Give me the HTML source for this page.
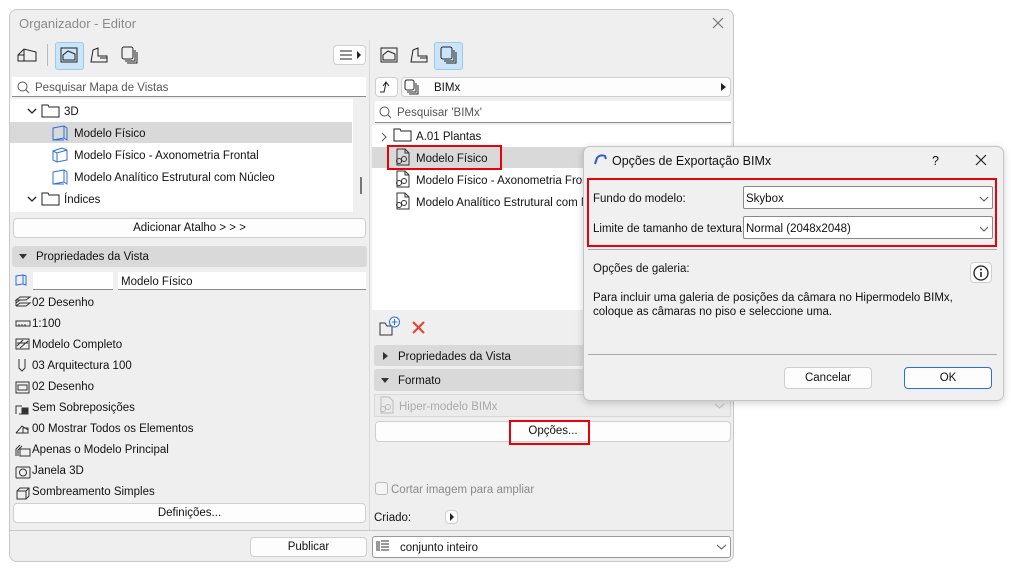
<!DOCTYPE html>
<html><head><meta charset="utf-8"><style>
*{box-sizing:border-box;margin:0;padding:0}
body{width:1011px;height:570px;background:#fff;font-family:"Liberation Sans",sans-serif;font-size:11.5px;color:#111;position:relative;overflow:hidden}
.a{position:absolute}
.t{position:absolute;white-space:nowrap;line-height:14px;margin-top:1px}
.btn{position:absolute;background:#fdfdfd;border:1px solid #cfcfcf;border-radius:4px;text-align:center;line-height:19px}
.inp{position:absolute;background:#fff;border-bottom:1px solid #8a8a8a}
.hdr{position:absolute;background:#d9d9d9;border-radius:3px}
svg{position:absolute;overflow:visible}
.red{position:absolute;border:2.5px solid #e8000b}
</style></head><body>
<div class="a" style="left:9px;top:9px;width:725px;height:553px;background:#efefef;border:1px solid #c8c8c8;border-radius:8px"></div>
<div class="t" style="left:19px;top:16px;color:#8a8a8a;font-size:13px">Organizador - Editor</div>
<svg style="left:712px;top:17px" width="12" height="12"><path d="M1 1L11 11M11 1L1 11" stroke="#777" stroke-width="1.2"/></svg>

<svg style="left:17px;top:47px" width="20" height="16"><path d="M1 14V8L7 2L19 5V14ZM7 2V14M1 8H7" fill="none" stroke="#222"/></svg>
<div class="a" style="left:47px;top:44px;width:1px;height:22px;background:#bbb"></div>
<div class="a" style="left:55px;top:42px;width:29px;height:28px;background:#cce4f7;border:1px solid #99c9ef;border-radius:3px"></div>
<svg style="left:60px;top:47px" width="18" height="17"><rect x="1" y="1" width="16" height="14" fill="none" stroke="#222"/><path d="M3 13V8L8 4L15 7V13Z" fill="none" stroke="#222"/></svg>
<svg style="left:90px;top:47px" width="18" height="17"><path d="M1 15L3 3L8 1V9H17V15ZM10 11H17" fill="none" stroke="#222"/></svg>
<svg style="left:121px;top:46px" width="18" height="18"><rect x="1" y="1" width="11" height="12" rx="2" fill="none" stroke="#222"/><path d="M4 15H14V4M6 17H16V6" fill="none" stroke="#222"/></svg>
<div class="btn" style="left:333px;top:45px;width:33px;height:20px"></div>
<svg style="left:340px;top:50px" width="22" height="10"><path d="M0 1H12M0 5H12M0 9H12" stroke="#222"/><path d="M17 1L21 5L17 9Z" fill="#222"/></svg>
<div class="inp" style="left:12px;top:77px;width:354px;height:20px"></div>
<svg style="left:17px;top:81px" width="13" height="13"><circle cx="5.5" cy="5.5" r="4.5" fill="none" stroke="#555"/><path d="M9 9L12 12" stroke="#555"/></svg>
<div class="t" style="left:35px;top:80px;color:#555">Pesquisar Mapa de Vistas</div>
<div class="a" style="left:10px;top:99px;width:343px;height:113px;background:#fff"></div>
<div class="a" style="left:10px;top:122px;width:342px;height:21px;background:#d9d9d9"></div>
<svg style="left:27px;top:108px" width="10" height="6"><path d="M1 1L5 5L9 1" fill="none" stroke="#222" stroke-width="1.3"/></svg>
<svg style="left:41px;top:104px" width="19" height="14"><path d="M1 1H7L8 3H18V13H1Z" fill="none" stroke="#222"/></svg>
<div class="t" style="left:64px;top:104px">3D</div>
<svg style="left:52px;top:125px" width="16" height="16"><path d="M1 3L12 1V13L1 15ZM12 1L15 3V15L12 13M1 15H12" fill="none" stroke="#2a6fdb"/></svg>
<div class="t" style="left:74px;top:126px">Modelo Físico</div>
<svg style="left:52px;top:147px" width="16" height="16"><path d="M1 4L10 1L15 3V13L5 15L1 13ZM1 4L5 6L15 3M5 6V15" fill="none" stroke="#2a6fdb"/></svg>
<div class="t" style="left:74px;top:148px">Modelo Físico - Axonometria Frontal</div>
<svg style="left:52px;top:169px" width="16" height="16"><path d="M1 3L12 1V13L1 15ZM12 1L15 3V15L12 13M1 15H12" fill="none" stroke="#2a6fdb"/></svg>
<div class="t" style="left:74px;top:170px">Modelo Analítico Estrutural com Núcleo</div>
<svg style="left:27px;top:196px" width="10" height="6"><path d="M1 1L5 5L9 1" fill="none" stroke="#222" stroke-width="1.3"/></svg>
<svg style="left:41px;top:192px" width="19" height="14"><path d="M1 1H7L8 3H18V13H1Z" fill="none" stroke="#222"/></svg>
<div class="t" style="left:64px;top:192px">Índices</div>
<div class="a" style="left:360px;top:177px;width:2px;height:17px;background:#777"></div>
<div class="btn" style="left:13px;top:218px;width:353px;height:20px">Adicionar Atalho &gt; &gt; &gt;</div>
<div class="hdr" style="left:12px;top:246px;width:355px;height:21px"></div>
<svg style="left:19px;top:254px" width="8" height="5"><path d="M0 0H8L4 5Z" fill="#333"/></svg>
<div class="t" style="left:36px;top:249px">Propriedades da Vista</div>
<svg style="left:15px;top:274px" width="12" height="12"><path d="M1 2L8 1V10L1 11ZM8 1L11 2V11L8 10" fill="none" stroke="#2a6fdb"/></svg>
<div class="inp" style="left:33px;top:272px;width:80px;height:18px"></div>
<div class="inp" style="left:118px;top:272px;width:248px;height:18px"></div>
<div class="t" style="left:121px;top:274px">Modelo Físico</div>
<div class="t" style="left:32px;top:295px">02 Desenho</div>
<div class="t" style="left:32px;top:316px">1:100</div>
<div class="t" style="left:32px;top:337px">Modelo Completo</div>
<div class="t" style="left:32px;top:358px">03 Arquitectura 100</div>
<div class="t" style="left:32px;top:379px">02 Desenho</div>
<div class="t" style="left:32px;top:400px">Sem Sobreposições</div>
<div class="t" style="left:32px;top:421px">00 Mostrar Todos os Elementos</div>
<div class="t" style="left:32px;top:442px">Apenas o Modelo Principal</div>
<div class="t" style="left:32px;top:463px">Janela 3D</div>
<div class="t" style="left:32px;top:484px">Sombreamento Simples</div>
<svg style="left:15px;top:296px" width="16" height="200" fill="none" stroke="#333">
<path d="M1 4L5 1H15L11 4ZM1 7L5 4M1 10L5 7H15L11 10H1M1 4V10"/>
<rect x="1" y="25" width="14" height="5"/><path d="M4 28V30M7 28V30M10 28V30"/>
<rect x="1" y="43" width="13" height="10"/><path d="M2 50L8 44M5 52L13 45M2 47H13"/>
<path d="M4 63V72L7 75L10 72V63"/>
<rect x="1" y="86" width="13" height="11"/><rect x="3" y="89" width="9" height="5"/>
<path d="M1 118V110H7M4 118H13V112"/><rect x="7" y="112" width="6" height="6" fill="#333"/>
<path d="M1 137L7 130L13 134V137H1"/><rect x="8" y="132" width="5" height="5"/>
<path d="M1 160V153L5 149M3 160V154L7 150"/><rect x="5" y="153" width="10" height="7"/>
<rect x="1" y="171" width="14" height="11" rx="1"/><circle cx="8" cy="176.5" r="3.5"/>
<path d="M2 195L5 192H14V200L11 203H2ZM2 195H11V203M11 195L14 192"/>
</svg>
<div class="btn" style="left:13px;top:503px;width:353px;height:20px">Definições...</div>
<div class="a" style="left:10px;top:530px;width:723px;height:1px;background:#c8c8c8"></div>
<div class="btn" style="left:250px;top:537px;width:117px;height:20px">Publicar</div>
<div class="a" style="left:369px;top:40px;width:1px;height:490px;background:#d8d8d8"></div>

<svg style="left:380px;top:47px" width="18" height="17"><rect x="1" y="1" width="16" height="14" fill="none" stroke="#222"/><path d="M3 13V8L8 4L15 7V13Z" fill="none" stroke="#222"/></svg>
<svg style="left:410px;top:47px" width="18" height="17"><path d="M1 15L3 3L8 1V9H17V15ZM10 11H17" fill="none" stroke="#222"/></svg>
<div class="a" style="left:434px;top:42px;width:29px;height:28px;background:#cce4f7;border:1px solid #99c9ef;border-radius:3px"></div>
<svg style="left:440px;top:46px" width="18" height="18"><rect x="1" y="1" width="11" height="12" rx="2" fill="none" stroke="#222"/><path d="M4 15H14V4M6 17H16V6" fill="none" stroke="#222"/></svg>
<div class="btn" style="left:375px;top:77px;width:23px;height:20px"></div>
<svg style="left:379px;top:81px" width="14" height="12"><path d="M1 11H5L7 2M4 5L7 1L10 5" fill="none" stroke="#222"/></svg>
<div class="btn" style="left:401px;top:77px;width:330px;height:20px"></div>
<svg style="left:404px;top:79px" width="15" height="16"><rect x="1" y="1" width="9" height="10" rx="2" fill="none" stroke="#222"/><path d="M3 13H12V4M5 15H14V6" fill="none" stroke="#222"/></svg>
<div class="t" style="left:434px;top:80px">BIMx</div>
<svg style="left:721px;top:83px" width="5" height="8"><path d="M0 0L5 4L0 8Z" fill="#222"/></svg>
<div class="inp" style="left:375px;top:101px;width:356px;height:22px"></div>
<svg style="left:379px;top:106px" width="13" height="13"><circle cx="5.5" cy="5.5" r="4.5" fill="none" stroke="#555"/><path d="M9 9L12 12" stroke="#555"/></svg>
<div class="t" style="left:397px;top:105px;color:#555">Pesquisar 'BIMx'</div>
<div class="a" style="left:372px;top:125px;width:359px;height:185px;background:#fff"></div>
<div class="a" style="left:372px;top:147px;width:359px;height:21px;background:#d9d9d9"></div>
<svg style="left:381px;top:132px" width="6" height="10"><path d="M1 1L5 5L1 9" fill="none" stroke="#555"/></svg>
<svg style="left:393px;top:128px" width="19" height="14"><path d="M1 1H7L8 3H18V13H1Z" fill="none" stroke="#222"/></svg>
<div class="t" style="left:416px;top:129px">A.01 Plantas</div>
<svg style="left:394px;top:148px" width="600" height="70" fill="none" stroke="#333">
<g><path d="M3 1H11L15 5V17H3ZM11 1V5H15"/><circle cx="5" cy="13" r="2.5"/><circle cx="10" cy="11" r="2.5"/></g>
<g transform="translate(0,22)"><path d="M3 1H11L15 5V17H3ZM11 1V5H15"/><circle cx="5" cy="13" r="2.5"/><circle cx="10" cy="11" r="2.5"/></g>
<g transform="translate(0,44)"><path d="M3 1H11L15 5V17H3ZM11 1V5H15"/><circle cx="5" cy="13" r="2.5"/><circle cx="10" cy="11" r="2.5"/></g>
</svg>
<div class="t" style="left:416px;top:151px">Modelo Físico</div>
<div class="t" style="left:416px;top:173px">Modelo Físico - Axonometria Frontal</div>
<div class="t" style="left:416px;top:195px">Modelo Analítico Estrutural com Núcleo</div>
<div class="red" style="left:387px;top:145px;width:115px;height:25px"></div>
<svg style="left:379px;top:316px" width="22" height="20"><path d="M1 7V19H13V10H8L6 7Z" fill="none" stroke="#333"/><circle cx="15.5" cy="6" r="5" fill="#fff" stroke="#2a6fdb"/><path d="M15.5 3V9M12.5 6H18.5" stroke="#2a6fdb"/></svg>
<svg style="left:412px;top:321px" width="13" height="13"><path d="M1 1L12 12M12 1L1 12" stroke="#e8402a" stroke-width="2"/></svg>
<div class="hdr" style="left:374px;top:345px;width:357px;height:21px"></div>
<svg style="left:383px;top:352px" width="5" height="8"><path d="M0 0L5 4L0 8Z" fill="#333"/></svg>
<div class="t" style="left:398px;top:349px">Propriedades da Vista</div>
<div class="hdr" style="left:374px;top:369px;width:357px;height:22px"></div>
<svg style="left:381px;top:378px" width="8" height="5"><path d="M0 0H8L4 5Z" fill="#333"/></svg>
<div class="t" style="left:398px;top:373px">Formato</div>
<div class="a" style="left:374px;top:394px;width:357px;height:23px;border:1px solid #d8d8d8;background:#ebebeb"></div>
<svg style="left:378px;top:396px" width="16" height="18" fill="none" stroke="#bbb"><path d="M3 1H11L15 5V17H3Z"/><circle cx="5" cy="13" r="2.5"/><circle cx="10" cy="11" r="2.5"/></svg>
<div class="t" style="left:399px;top:399px;color:#aaa">Hiper-modelo BIMx</div>
<svg style="left:714px;top:403px" width="11" height="6"><path d="M1 1L5.5 5L10 1" fill="none" stroke="#bbb"/></svg>
<div class="btn" style="left:375px;top:421px;width:356px;height:21px">Opções...</div>
<div class="red" style="left:509px;top:420px;width:81px;height:25px"></div>
<div class="a" style="left:375px;top:482px;width:13px;height:13px;border:1px solid #bbb;border-radius:3px;background:#f5f5f5"></div>
<div class="t" style="left:391px;top:482px;color:#8a8a8a">Cortar imagem para ampliar</div>
<div class="t" style="left:374px;top:510px">Criado:</div>
<div class="btn" style="left:445px;top:510px;width:13px;height:14px"></div>
<svg style="left:450px;top:513px" width="4" height="8"><path d="M0 0L4 4L0 8Z" fill="#222"/></svg>
<div class="a" style="left:372px;top:536px;width:359px;height:22px;background:#fff;border:1px solid #999;border-radius:3px"></div>
<svg style="left:376px;top:540px" width="14" height="12" stroke="#333"><path d="M1 1V11M3 1V11M5 1H13M5 4H13M5 7H13M5 10H13"/></svg>
<div class="t" style="left:400px;top:540px">conjunto inteiro</div>
<svg style="left:716px;top:544px" width="11" height="6"><path d="M1 1L5.5 5L10 1" fill="none" stroke="#555"/></svg>

<div class="a" style="left:583px;top:146px;width:421px;height:255px;background:#f0f0f0;border:1px solid #c4c4c4;border-radius:7px;box-shadow:0 2px 8px rgba(0,0,0,.18)"></div>
<svg style="left:593px;top:153px" width="14" height="12"><path d="M2 11L4 5Q7 1 12 3L13 6" fill="none" stroke="#2a5bd0" stroke-width="2"/></svg>
<div class="t" style="left:612px;top:153px;font-size:12.5px">Opções de Exportação BIMx</div>
<div class="t" style="left:932px;top:153px;font-size:12.5px">?</div>
<svg style="left:975px;top:154px" width="12" height="12"><path d="M1 1L11 11M11 1L1 11" stroke="#222" stroke-width="1.2"/></svg>
<div class="red" style="left:587px;top:178px;width:410px;height:69px"></div>
<div class="t" style="left:593px;top:191px">Fundo do modelo:</div>
<div class="t" style="left:593px;top:221px">Limite de tamanho de textura</div>
<div class="a" style="left:743px;top:186px;width:250px;height:23px;background:#fff;border:1px solid #888;border-radius:2px"></div>
<div class="t" style="left:746px;top:191px">Skybox</div>
<svg style="left:979px;top:196px" width="10" height="6"><path d="M1 1L5 5L9 1" fill="none" stroke="#555"/></svg>
<div class="a" style="left:743px;top:216px;width:250px;height:23px;background:#fff;border:1px solid #888;border-radius:2px"></div>
<div class="t" style="left:746px;top:221px">Normal (2048x2048)</div>
<svg style="left:979px;top:226px" width="10" height="6"><path d="M1 1L5 5L9 1" fill="none" stroke="#555"/></svg>
<div class="a" style="left:588px;top:249px;width:409px;height:1px;background:#aaa"></div>
<div class="t" style="left:593px;top:261px">Opções de galeria:</div>
<div class="btn" style="left:970px;top:262px;width:22px;height:21px"></div>
<svg style="left:973px;top:265px" width="16" height="16"><circle cx="8" cy="8" r="7" fill="none" stroke="#222" stroke-width="1.3"/><path d="M8 7V12" stroke="#222" stroke-width="1.6"/><circle cx="8" cy="4.5" r="1" fill="#222"/></svg>
<div class="t" style="left:593px;top:290px">Para incluir uma galeria de posições da câmara no Hipermodelo BIMx,</div>
<div class="t" style="left:593px;top:304px">coloque as câmaras no piso e seleccione uma.</div>
<div class="a" style="left:588px;top:354px;width:409px;height:1px;background:#aaa"></div>
<div class="btn" style="left:784px;top:367px;width:88px;height:22px;line-height:20px">Cancelar</div>
<div class="btn" style="left:904px;top:367px;width:88px;height:22px;line-height:20px;border-color:#2a6fdb">OK</div>
</body></html>
